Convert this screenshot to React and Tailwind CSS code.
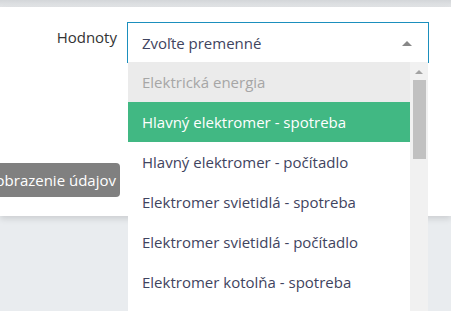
import React from 'react'

const options = [
  'Hlavný elektromer - spotreba',
  'Hlavný elektromer - počítadlo',
  'Elektromer svietidlá - spotreba',
  'Elektromer svietidlá - počítadlo',
  'Elektromer kotolňa - spotreba',
]

export default function App() {
  return (
    <div className="w-[451px] h-[311px] overflow-hidden bg-[#e9ecef] font-['Open_Sans',sans-serif] text-[15px]">
      {/* top strip */}
      <div className="h-[7px] bg-gradient-to-b from-[#d3d6d9] to-[#e4e6e8]" />

      {/* form panel */}
      <div className="relative h-[209px] bg-white shadow-[0_3px_6px_rgba(0,0,0,0.12)]">
        <div className="flex pt-[15px]">
          <label className="w-[117px] shrink-0 pt-[4px] text-right leading-[22px] text-[#333]">Hodnoty</label>
          <div className="relative ml-[10px] w-[302px]">
            <div className="flex h-[41px] items-center justify-between border border-b-0 border-[#1b8fbd] pl-[14px] pr-[16px] text-[#3f4460]">
              <span>Zvoľte premenné</span>
              <span className="h-0 w-0 border-x-[5px] border-b-[5px] border-x-transparent border-b-[#888]" />
            </div>

            {/* open dropdown */}
            <div className="absolute left-[1px] top-[40px] z-10 flex w-[300px] bg-white">
              <ul className="w-[282px]">
                <li className="flex h-[40px] items-center bg-[#ebebeb] px-[14px] text-[#a6a6a6]">Elektrická energia</li>
                {options.map((o, i) => (
                  <li
                    key={o}
                    className={
                      i === 0
                        ? 'flex h-[40px] items-center bg-[#41b883] px-[14px] text-white'
                        : 'flex h-[40px] items-center px-[14px] text-[#3f4460]'
                    }
                  >
                    {o}
                  </li>
                ))}
                <li className="h-[20px]" />
              </ul>
              {/* scrollbar */}
              <div className="flex w-[18px] flex-col items-center bg-[#f1f1f1]">
                <span className="mt-[8px] h-0 w-0 border-x-[4px] border-b-[4px] border-x-transparent border-b-[#a3a3a3]" />
                <div className="mt-[6px] h-[79px] w-[13px] bg-[#c1c1c1]" />
              </div>
            </div>
          </div>
        </div>

        <div className="mt-[100px] flex w-[120px] justify-end overflow-hidden">
          <button className="h-[34px] shrink-0 whitespace-nowrap rounded-[4px] bg-[#808080] px-[4px] text-white">
            Zobrazenie údajov
          </button>
        </div>
      </div>
    </div>
  )
}
